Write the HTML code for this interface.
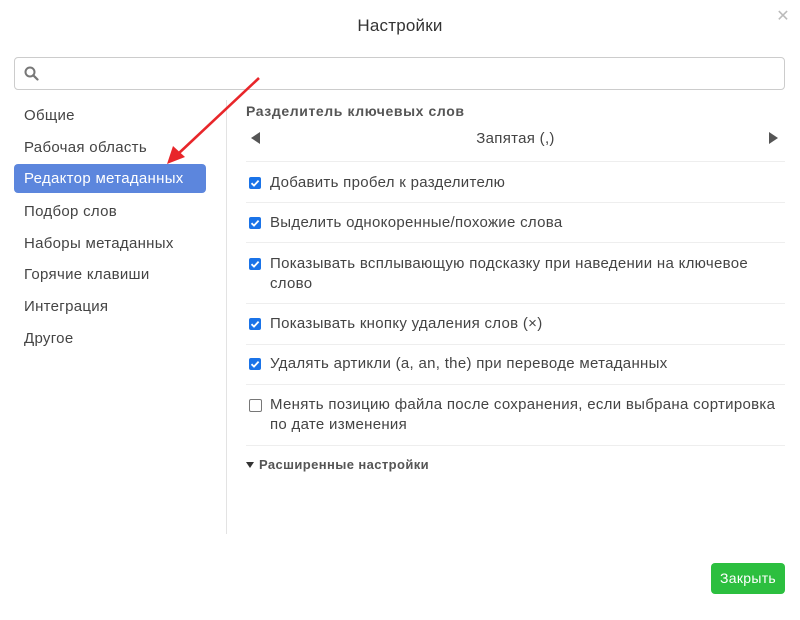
<!DOCTYPE html>
<html><head><meta charset="utf-8"><style>
body{margin:0;width:800px;height:620px;background:#fff;font-family:"Liberation Sans","DejaVu Sans",sans-serif;color:#444;position:relative;overflow:hidden;font-size:15px;letter-spacing:0.3px}
.abs{position:absolute;white-space:nowrap}
.title{left:0;width:800px;top:16px;text-align:center;font-size:17px;color:#333;letter-spacing:0.2px}
.close{right:10px;top:6px;color:#bbb;font-size:16px}
.search{left:14px;top:57px;width:771px;height:33px;border:1px solid #ccc;border-radius:4px;box-sizing:border-box}
.nav{left:24px;color:#444}
.sel{left:14px;top:164px;width:192px;height:29px;background:#5c86dd;border-radius:4px;color:#fff;box-sizing:border-box;padding-left:10px;line-height:29px}
.vline{left:226px;top:100px;width:1px;height:434px;background:#e3e3e3}
.hl{left:246px;width:539px;height:1px;background:#eee}
.cb{left:249px;width:12px;height:12px;background:#1a73e8;border-radius:2px}
.cb svg{position:absolute;left:0;top:0}
.cbo{left:249px;width:11px;height:11px;border:1px solid #777;border-radius:2px;background:#fff}
.t{left:270px;color:#444;line-height:20px}
.btn{left:711px;top:563px;width:74px;height:31px;background:#2cbf3f;border-radius:4px;color:#fff;text-align:center;line-height:31px;font-size:14px;letter-spacing:0.3px}
</style></head><body>
<div class="abs title">Настройки</div>
<div class="abs close">✕</div>
<div class="abs search"><svg class="abs" style="left:9px;top:8px" width="15" height="15" viewBox="0 0 15 15"><circle cx="6" cy="6" r="4.5" fill="none" stroke="#777" stroke-width="2"/><path d="M9.3 9.3L13.5 13.5" stroke="#777" stroke-width="2.2" stroke-linecap="round"/></svg></div>
<div class="abs nav" style="top:107px">Общие</div>
<div class="abs nav" style="top:139px">Рабочая область</div>
<div class="abs sel">Редактор метаданных</div>
<div class="abs nav" style="top:203px">Подбор слов</div>
<div class="abs nav" style="top:235px">Наборы метаданных</div>
<div class="abs nav" style="top:266px">Горячие клавиши</div>
<div class="abs nav" style="top:298px">Интеграция</div>
<div class="abs nav" style="top:330px">Другое</div>
<div class="abs vline"></div>
<div class="abs" style="left:246px;top:103px;font-weight:bold;color:#555;font-size:14px;letter-spacing:0.6px">Разделитель ключевых слов</div>
<div class="abs" style="left:251px;top:132px;width:0;height:0;border-top:6px solid transparent;border-bottom:6px solid transparent;border-right:9px solid #555"></div>
<div class="abs" style="left:769px;top:132px;width:0;height:0;border-top:6px solid transparent;border-bottom:6px solid transparent;border-left:9px solid #555"></div>
<div class="abs" style="left:246px;width:539px;top:130px;text-align:center">Запятая (,)</div>
<div class="abs hl" style="top:161px"></div>
<div class="abs cb" style="top:177px"><svg width="12" height="12"><path d="M2.5 6.2L5 8.6L9.6 3.6" stroke="#fff" stroke-width="1.8" fill="none"/></svg></div>
<div class="abs t" style="top:173px">Добавить пробел к разделителю</div>
<div class="abs hl" style="top:202px"></div>
<div class="abs cb" style="top:217px"><svg width="12" height="12"><path d="M2.5 6.2L5 8.6L9.6 3.6" stroke="#fff" stroke-width="1.8" fill="none"/></svg></div>
<div class="abs t" style="top:213px">Выделить однокоренные/похожие слова</div>
<div class="abs hl" style="top:242px"></div>
<div class="abs cb" style="top:258px"><svg width="12" height="12"><path d="M2.5 6.2L5 8.6L9.6 3.6" stroke="#fff" stroke-width="1.8" fill="none"/></svg></div>
<div class="abs t" style="top:254px">Показывать всплывающую подсказку при наведении на ключевое<br>слово</div>
<div class="abs hl" style="top:303px"></div>
<div class="abs cb" style="top:318px"><svg width="12" height="12"><path d="M2.5 6.2L5 8.6L9.6 3.6" stroke="#fff" stroke-width="1.8" fill="none"/></svg></div>
<div class="abs t" style="top:314px">Показывать кнопку удаления слов (×)</div>
<div class="abs hl" style="top:344px"></div>
<div class="abs cb" style="top:358px"><svg width="12" height="12"><path d="M2.5 6.2L5 8.6L9.6 3.6" stroke="#fff" stroke-width="1.8" fill="none"/></svg></div>
<div class="abs t" style="top:354px">Удалять артикли (a, an, the) при переводе метаданных</div>
<div class="abs hl" style="top:384px"></div>
<div class="abs cbo" style="top:399px"></div>
<div class="abs t" style="top:395px">Менять позицию файла после сохранения, если выбрана сортировка<br>по дате изменения</div>
<div class="abs hl" style="top:445px"></div>
<div class="abs" style="left:246px;top:462px;width:0;height:0;border-left:4px solid transparent;border-right:4px solid transparent;border-top:6px solid #333"></div>
<div class="abs" style="left:259px;top:457px;font-size:13px;font-weight:bold;color:#555;letter-spacing:0.4px">Расширенные настройки</div>
<div class="abs btn">Закрыть</div>
<svg class="abs" style="left:0;top:0" width="800" height="620"><path d="M259 78L178 154" stroke="#e8262a" stroke-width="2.6"/><path d="M167 164L173 146L185 157Z" fill="#e8262a"/></svg>
</body></html>
